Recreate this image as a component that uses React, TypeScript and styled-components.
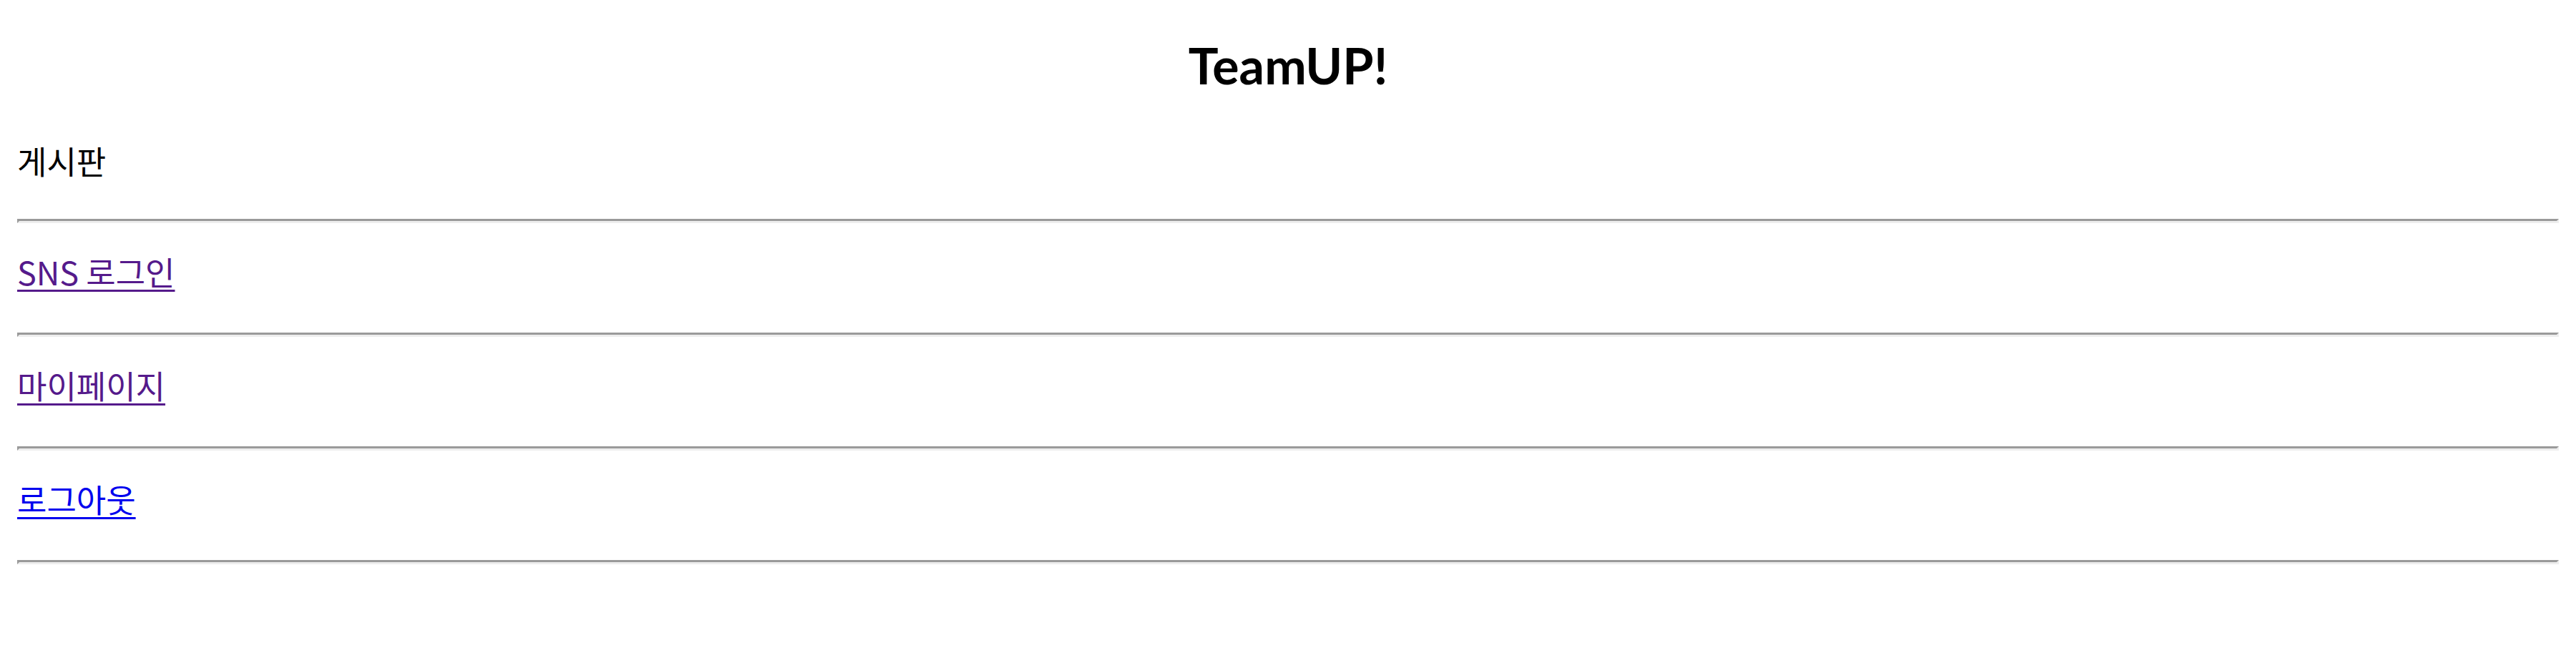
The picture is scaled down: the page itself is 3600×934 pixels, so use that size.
import styled, { createGlobalStyle } from "styled-components";

const GlobalStyle = createGlobalStyle`
  body {
    margin: 0;
    background: #ffffff;
    color: #000000;
    font-family: "Noto Sans CJK KR", "Noto Sans", sans-serif;
  }
`;

const Page = styled.div`
  padding: 34px 24px;
`;

const Title = styled.h1`
  margin: 5px 0 0;
  font-family: Lato, "Noto Sans CJK KR", sans-serif;
  font-size: 70px;
  line-height: 104px;
  font-weight: 700;
  text-align: center;
`;

const BoardLabel = styled.div`
  margin-top: 47px;
  font-size: 45px;
  line-height: 70px;
`;

const Menu = styled.nav`
  display: flex;
  flex-direction: column;
`;

const Divider = styled.hr<{ $first?: boolean }>`
  margin: ${(p) => (p.$first ? "46px 0 0" : "0")};
  height: 0;
  border-style: solid;
  border-width: 3px;
  border-color: #9a9a9a #eeeeee #eeeeee #9a9a9a;
`;

const MenuRow = styled.div`
  padding: 33px 0 50px;
  font-size: 45px;
  line-height: 70px;
`;

const MenuLink = styled.a<{ $visited?: boolean }>`
  color: ${(p) => (p.$visited ? "#551a8b" : "#0000ee")};
  text-decoration: underline;
  text-decoration-thickness: 3px;
  text-underline-offset: 6px;
`;

const items = [
  { label: "SNS 로그인", visited: true },
  { label: "마이페이지", visited: true },
  { label: "로그아웃", visited: false },
];

export default function App() {
  return (
    <>
      <GlobalStyle />
      <Page>
        <Title>TeamUP!</Title>
        <BoardLabel>게시판</BoardLabel>
        <Menu>
          <Divider $first />
          {items.map((item) => (
            <div key={item.label}>
              <MenuRow>
                <MenuLink href="#" $visited={item.visited}>
                  {item.label}
                </MenuLink>
              </MenuRow>
              <Divider />
            </div>
          ))}
        </Menu>
      </Page>
    </>
  );
}
